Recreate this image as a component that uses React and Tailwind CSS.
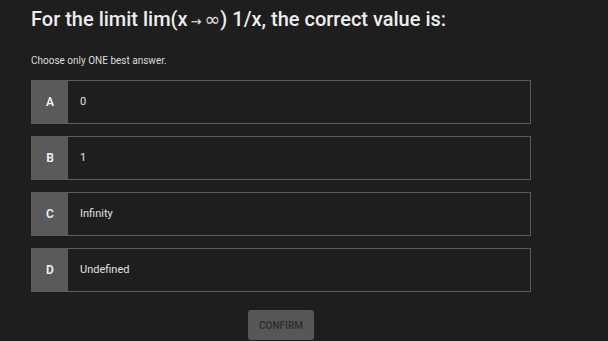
const options = [
  { key: 'A', label: '0' },
  { key: 'B', label: '1' },
  { key: 'C', label: 'Infinity' },
  { key: 'D', label: 'Undefined' },
]

export default function App() {
  return (
    <div className="min-h-[341px] bg-[#1e1e1e] font-['Roboto',sans-serif] text-[#e6e6e6]">
      <div className="w-[500px] ml-[31px] pt-[5px]">
        <h1 className="text-[20px] font-medium leading-[28px] text-[#ededed]">
          For the limit lim(x
          <span className="font-['DejaVu_Sans',sans-serif] font-normal text-[13px] mx-[3px]">→</span>
          <span className="font-['DejaVu_Sans',sans-serif] font-normal text-[19px] text-[#e0e0e0]">∞</span>) 1/x, the correct value is:
        </h1>
        <p className="mt-[19px] text-[10px] leading-[12px] text-[#dcdcdc]">Choose only ONE best answer.</p>

        <div className="mt-[13px] flex flex-col gap-[12px]">
          {options.map(o => (
            <div key={o.key} className="flex h-[44px] border border-[#5c5c5c]">
              <div className="w-[36px] bg-[#5a5a5a] flex items-center justify-center text-[12px] font-semibold text-[#f2f2f2]">
                {o.key}
              </div>
              <div className="flex items-center pl-[12px] text-[11px] text-[#e0e0e0]">{o.label}</div>
            </div>
          ))}
        </div>

        <div className="mt-[18px] flex justify-center">
          <button className="w-[66px] h-[30px] rounded-[3px] bg-[#575757] text-[10px] font-semibold text-[#2e2e2e]">
            CONFIRM
          </button>
        </div>
      </div>
    </div>
  )
}
